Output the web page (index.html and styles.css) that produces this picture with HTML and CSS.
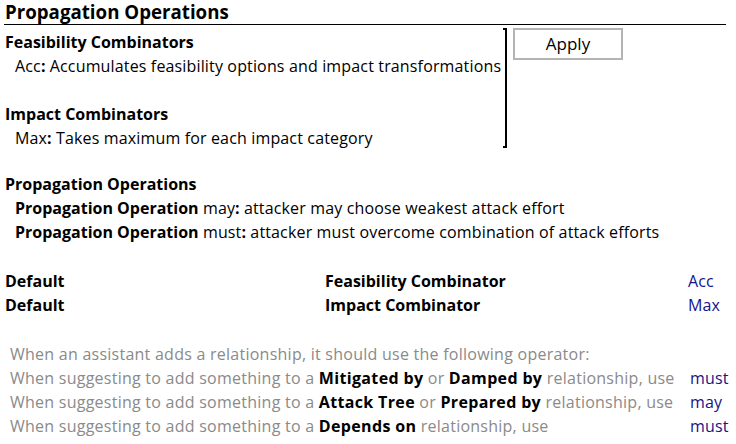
FILE: index.html
```html
<!DOCTYPE html>
<html lang="en">
<head>
    <meta charset="UTF-8">
    <title>Propagation Operations</title>
    <link rel="stylesheet" href="styles.css">
</head>
<body>
    <div class="page">
        <h1 class="title">Propagation Operations</h1>

        <div class="top">
            <div class="combinators">
                <div class="head">Feasibility Combinators</div>
                <div class="item">Acc<b>:</b> Accumulates feasibility options and impact transformations</div>
                <div class="blank"></div>
                <div class="head">Impact Combinators</div>
                <div class="item">Max<b>:</b> Takes maximum for each impact category</div>
            </div>
            <div class="bracket"></div>
            <button class="apply">Apply</button>
        </div>

        <div class="ops">
            <div class="head">Propagation Operations</div>
            <div class="item"><b>Propagation Operation</b> may<b>:</b> attacker may choose weakest attack effort</div>
            <div class="item"><b>Propagation Operation</b> must<b>:</b> attacker must overcome combination of attack efforts</div>
        </div>

        <div class="defaults">
            <div class="head">Default</div>
            <div class="head">Feasibility Combinator</div>
            <div class="val">Acc</div>
            <div class="head">Default</div>
            <div class="head">Impact Combinator</div>
            <div class="val">Max</div>
        </div>

        <div class="hints">
            <div class="hint">When an assistant adds a relationship, it should use the following operator:</div>
            <div></div>
            <div class="hint">When suggesting to add something to a <b>Mitigated by</b> or <b>Damped by</b> relationship, use</div>
            <div class="val">must</div>
            <div class="hint">When suggesting to add something to a <b>Attack Tree</b> or <b>Prepared by</b> relationship, use</div>
            <div class="val">may</div>
            <div class="hint">When suggesting to add something to a <b>Depends on</b> relationship, use</div>
            <div class="val">must</div>
        </div>
    </div>
</body>
</html>
```

FILE: styles.css
```css
html, body {
    margin: 0;
    padding: 0;
    background: #ffffff;
}

body {
    color: #000000;
    font-family: "Open Sans", "Noto Sans", sans-serif;
    font-size: 16px;
    line-height: 24px;
    letter-spacing: 0.15px;
}

b {
    font-weight: 700;
    letter-spacing: 0;
}

.page {
    padding: 0 10px 0 4px;
}

.title {
    margin: 0;
    padding-left: 1px;
    font-size: 18.7px;
    font-weight: 700;
    line-height: 24px;
    letter-spacing: 0;
    border-bottom: 1px solid #000;
}

.head {
    font-weight: 700;
    letter-spacing: 0;
    padding-left: 1px;
}

.item {
    padding-left: 11px;
}

.blank {
    height: 24px;
}

.top {
    display: flex;
    align-items: flex-start;
    margin-top: 3px;
}

.combinators {
    width: 499px;
    padding-top: 2px;
    white-space: nowrap;
}

.bracket {
    width: 2px;
    height: 116px;
    border: 2px solid #000;
    border-left: 0;
}

.apply {
    margin-left: 6px;
    width: 110px;
    height: 32px;
    padding: 0;
    background: #ffffff;
    border: 2px solid #b4b4b4;
    font-family: inherit;
    font-size: 17px;
    line-height: 24px;
    color: #000;
}

.ops {
    margin-top: 22px;
}

.defaults {
    display: grid;
    grid-template-columns: 320px 364px auto;
    margin-top: 25px;
}

.val {
    color: #14148c;
}

.hints {
    display: grid;
    grid-template-columns: 680px auto;
    margin-top: 25px;
    padding-left: 6px;
}

.hint {
    color: #8a8a8a;
    letter-spacing: 0.25px;
    white-space: nowrap;
}

.hint b {
    color: #000;
    letter-spacing: 0.35px;
}
```
